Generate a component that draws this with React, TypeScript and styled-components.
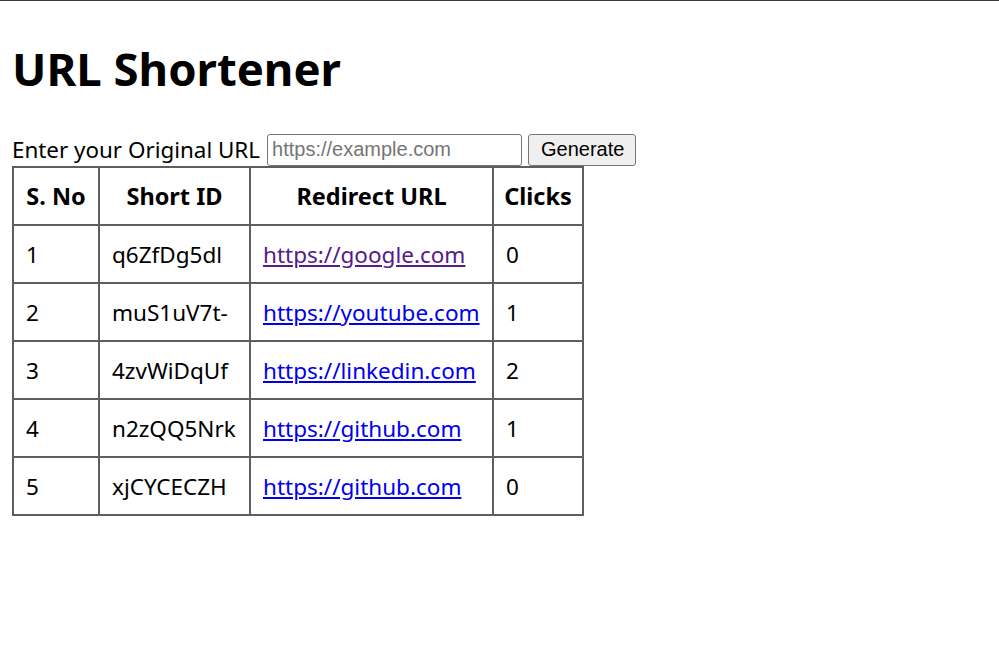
import React from "react";
import styled, { createGlobalStyle } from "styled-components";

const Global = createGlobalStyle`
  html, body { margin: 0; padding: 0; background: #ffffff; }
  body {
    font-family: "Noto Sans", "Open Sans", sans-serif;
    color: #000000;
    border-top: 1px solid #3c3c3c;
  }
`;

const Page = styled.main`
  padding: 0 12px;
`;

const Title = styled.h1`
  margin: 0;
  padding-top: 35px;
  font-size: 45.5px;
  line-height: 64px;
  font-weight: 700;
`;

const Form = styled.form`
  display: flex;
  align-items: center;
  margin-top: 33px;
  height: 33px;
`;

const Label = styled.label`
  font-size: 22.4px;
  line-height: 33px;
  margin-right: 7px;
`;

const UrlInput = styled.input`
  box-sizing: border-box;
  width: 255px;
  height: 32px;
  padding: 0 4px;
  border: 1px solid #767676;
  border-radius: 3px;
  font-family: "Liberation Sans", Arial, sans-serif;
  font-size: 20px;
  color: #000;
  &::placeholder { color: #757575; }
`;

const Button = styled.button`
  box-sizing: border-box;
  margin-left: 6px;
  height: 32px;
  width: 108px;
  padding: 0 12px;
  border: 1px solid #767676;
  border-radius: 3px;
  background: #efefef;
  font-family: "Liberation Sans", Arial, sans-serif;
  font-size: 20px;
  color: #000;
`;

const Table = styled.table`
  border-collapse: collapse;
  table-layout: fixed;
  width: 570px;
`;

const Th = styled.th<{ $w: number }>`
  box-sizing: border-box;
  width: ${(p) => p.$w}px;
  height: 58px;
  padding: 0 6px;
  border: 2px solid #5e5e5e;
  font-size: 23.5px;
  font-weight: 700;
  text-align: center;
  white-space: nowrap;
`;

const Td = styled.td`
  height: 56px;
  padding: 0 12px;
  border: 2px solid #5e5e5e;
  font-size: 22.5px;
  white-space: nowrap;
`;

const Link = styled.a<{ $visited?: boolean }>`
  color: ${(p) => (p.$visited ? "#551a8b" : "#0000ee")};
  text-decoration: underline;
`;

const rows = [
  { id: "q6ZfDg5dl", url: "https://google.com", clicks: 0, visited: true },
  { id: "muS1uV7t-", url: "https://youtube.com", clicks: 1 },
  { id: "4zvWiDqUf", url: "https://linkedin.com", clicks: 2 },
  { id: "n2zQQ5Nrk", url: "https://github.com", clicks: 1 },
  { id: "xjCYCECZH", url: "https://github.com", clicks: 0 },
];

export default function App() {
  return (
    <>
      <Global />
      <Page>
        <Title>URL Shortener</Title>
        <Form onSubmit={(e) => e.preventDefault()}>
          <Label htmlFor="url">Enter your Original URL</Label>
          <UrlInput id="url" type="text" placeholder="https://example.com" />
          <Button type="submit">Generate</Button>
        </Form>
        <Table>
          <thead>
            <tr>
              <Th $w={86}>S. No</Th>
              <Th $w={151}>Short ID</Th>
              <Th $w={243}>Redirect URL</Th>
              <Th $w={90}>Clicks</Th>
            </tr>
          </thead>
          <tbody>
            {rows.map((r, i) => (
              <tr key={r.id}>
                <Td>{i + 1}</Td>
                <Td>{r.id}</Td>
                <Td>
                  <Link href={r.url} $visited={r.visited}>
                    {r.url}
                  </Link>
                </Td>
                <Td>{r.clicks}</Td>
              </tr>
            ))}
          </tbody>
        </Table>
      </Page>
    </>
  );
}
